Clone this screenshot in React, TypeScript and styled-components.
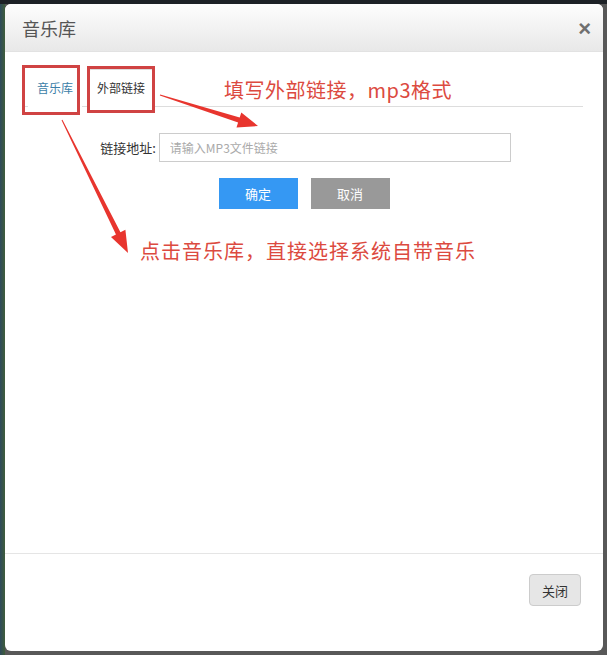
import React from "react";
import styled, { createGlobalStyle } from "styled-components";

const GlobalStyle = createGlobalStyle`
  html, body { margin: 0; padding: 0; }
  body {
    font-family: "Noto Sans CJK SC", "Noto Sans", "Liberation Sans", sans-serif;
    background: #575757;
  }
  * { box-sizing: border-box; }
`;

const Backdrop = styled.div`
  position: relative;
  width: 607px;
  height: 655px;
  padding: 4px 4px 4px 5px;
  background:
    linear-gradient(180deg, #1d2126 0, #1d2126 4px, transparent 4px),
    linear-gradient(90deg, #2e4a5c 0, #3f5d3a 5px, #585858 5px);
  overflow: hidden;
`;

const Dialog = styled.div`
  height: 100%;
  background: #fff;
  border-radius: 6px;
  display: flex;
  flex-direction: column;
  overflow: hidden;
`;

const Header = styled.div`
  height: 48px;
  flex: none;
  display: flex;
  align-items: center;
  justify-content: space-between;
  padding: 0 12px 0 17px;
  background: linear-gradient(180deg, #fdfdfd 0%, #e8e8e8 100%);
  border-bottom: 1px solid #e2e2e2;
`;

const Title = styled.h4`
  margin: 0;
  font-size: 18px;
  font-weight: normal;
  color: #555;
`;

const CloseX = styled.span`
  font-family: "Liberation Sans", "DejaVu Sans", sans-serif;
  font-size: 22px;
  font-weight: bold;
  color: #6f6f6f;
  line-height: 1;
  margin-top: 2px;
`;

const Body = styled.div`
  flex: 1;
  padding: 0 17px;
`;

const Tabs = styled.div`
  display: flex;
  margin: 17px 3px 0 0;
  padding-left: 6px;
  border-bottom: 1px solid #ddd;
`;

const Tab = styled.div<{ $active?: boolean }>`
  height: 38px;
  line-height: 36px;
  padding: 0 8px;
  margin-right: 6px;
  margin-bottom: -1px;
  font-size: 12px;
  color: ${(p) => (p.$active ? "#333" : "#3b7ea8")};
  background: #fff;
  border: 1px solid ${(p) => (p.$active ? "#ddd" : "transparent")};
  border-bottom-color: ${(p) => (p.$active ? "#fff" : "transparent")};
  border-radius: 3px 3px 0 0;
`;

const FormRow = styled.div`
  margin-top: 26px;
  display: flex;
  justify-content: center;
  align-items: center;
  padding-left: 3px;
`;

const Label = styled.label`
  font-size: 13px;
  color: #333;
  margin-right: 3px;
`;

const Input = styled.input`
  width: 352px;
  height: 29px;
  border: 1px solid #ccc;
  padding: 0 10px;
  font-family: inherit;
  font-size: 12px;
  color: #333;
  outline: none;
  &::placeholder { color: #aaa; }
`;

const ButtonRow = styled.div`
  margin-top: 16px;
  display: flex;
  justify-content: center;
  gap: 13px;
`;

const ActionButton = styled.button<{ $primary?: boolean }>`
  width: 79px;
  height: 31px;
  border: none;
  color: #fff;
  font-family: inherit;
  font-size: 13px;
  background: ${(p) => (p.$primary ? "#3598f3" : "#999")};
`;

const Footer = styled.div`
  height: 98px;
  flex: none;
  border-top: 1px solid #e5e5e5;
  display: flex;
  justify-content: flex-end;
  align-items: flex-start;
  padding: 20px 22px 0 0;
`;

const CloseButton = styled.button`
  width: 52px;
  height: 32px;
  border: 1px solid #ccc;
  border-radius: 4px;
  background: #e6e6e6;
  color: #333;
  font-family: inherit;
  font-size: 13px;
`;

const Mark = styled.div<{ $l: number; $t: number; $w: number; $h: number }>`
  position: absolute;
  left: ${(p) => p.$l}px;
  top: ${(p) => p.$t}px;
  width: ${(p) => p.$w}px;
  height: ${(p) => p.$h}px;
  border: 3px solid #d04343;
  pointer-events: none;
`;

const Note = styled.div<{ $l: number; $t: number; $ls: number }>`
  position: absolute;
  left: ${(p) => p.$l}px;
  top: ${(p) => p.$t}px;
  font-size: 20px;
  line-height: 24px;
  letter-spacing: ${(p) => p.$ls}px;
  color: #dc4a40;
  white-space: nowrap;
  pointer-events: none;
`;

const ArrowLayer = styled.svg`
  position: absolute;
  left: 0;
  top: 0;
  pointer-events: none;
`;

export default function App() {
  return (
    <>
      <GlobalStyle />
      <Backdrop>
        <Dialog>
          <Header>
            <Title>音乐库</Title>
            <CloseX>×</CloseX>
          </Header>
          <Body>
            <Tabs>
              <Tab>音乐库</Tab>
              <Tab $active>外部链接</Tab>
            </Tabs>
            <FormRow>
              <Label>链接地址:</Label>
              <Input placeholder="请输入MP3文件链接" />
            </FormRow>
            <ButtonRow>
              <ActionButton $primary>确定</ActionButton>
              <ActionButton>取消</ActionButton>
            </ButtonRow>
          </Body>
          <Footer>
            <CloseButton>关闭</CloseButton>
          </Footer>
        </Dialog>

        <Mark $l={22} $t={65} $w={58} $h={50} />
        <Mark $l={87} $t={66} $w={68} $h={47} />
        <Note $l={224} $t={78} $ls={0.5}>填写外部链接，mp3格式</Note>
        <Note $l={140} $t={239} $ls={1}>点击音乐库，直接选择系统自带音乐</Note>
        <ArrowLayer width={607} height={655} viewBox="0 0 607 655">
          <polygon
            fill="#e8352e"
            points="159.85,95.48 238.1,122.4 236.5,127.6 258,126 241.3,112.4 239.7,117.6 160.15,94.52"
          />
          <polygon
            fill="#e8352e"
            points="61.55,120.22 115.96,234.4 111.0,236.9 128,253 125.4,229.7 120.44,232.2 62.45,119.78"
          />
        </ArrowLayer>
      </Backdrop>
    </>
  );
}
